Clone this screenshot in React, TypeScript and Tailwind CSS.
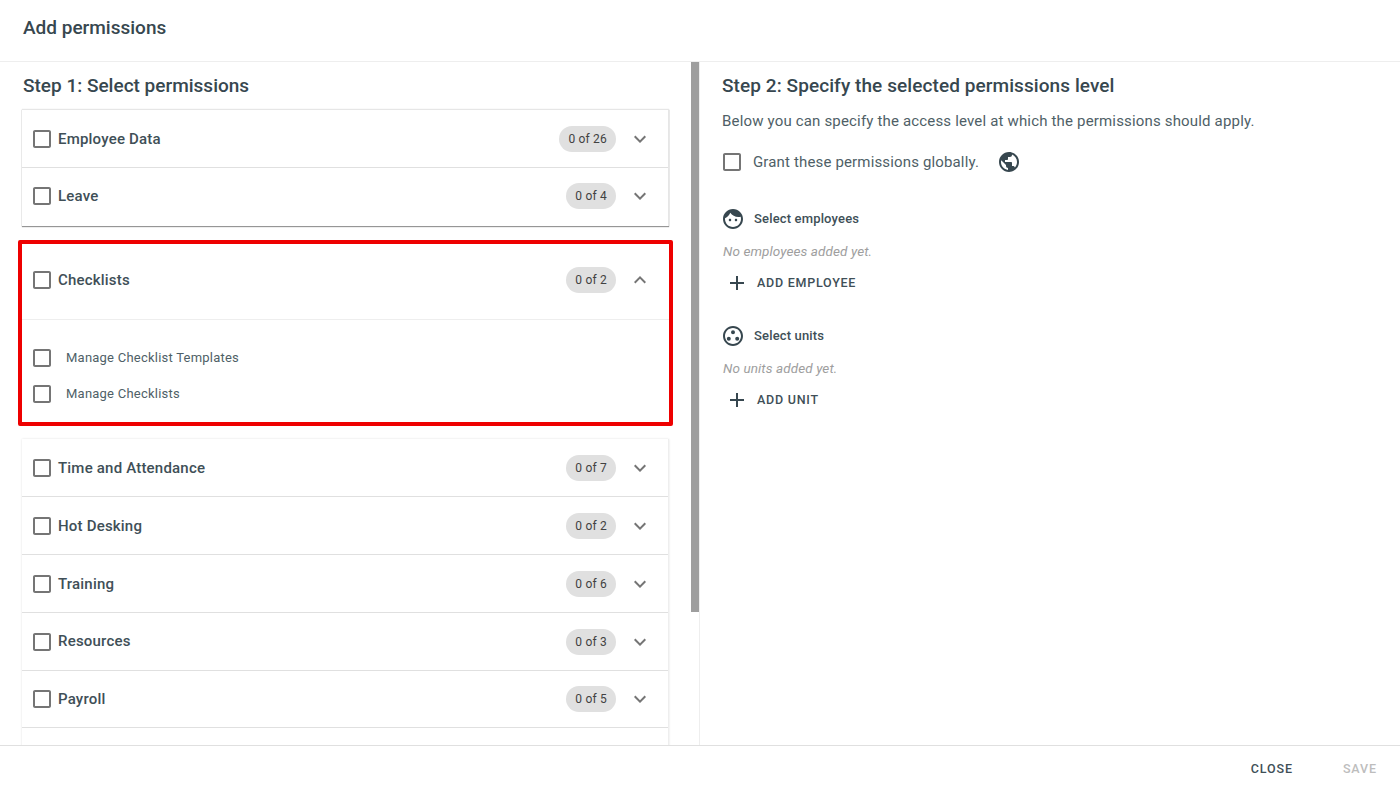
const FONT = "font-['Roboto',sans-serif]"

const CHECKBOX = 'M19 5v14H5V5h14m0-2H5c-1.1 0-2 .9-2 2v14c0 1.1.9 2 2 2h14c1.1 0 2-.9 2-2V5c0-1.1-.9-2-2-2z'
const EXPAND_MORE = 'M16.59 8.59L12 13.17 7.41 8.59 6 10l6 6 6-6z'
const EXPAND_LESS = 'M12 8l-6 6 1.41 1.41L12 10.83l4.59 4.58L18 14z'
const PLUS = 'M19 13h-6v6h-2v-6H5v-2h6V5h2v6h6v2z'
const GLOBE = 'M12 2C6.48 2 2 6.48 2 12s4.48 10 10 10 10-4.48 10-10S17.52 2 12 2zm-1 17.93c-3.95-.49-7-3.85-7-7.93 0-.62.08-1.21.21-1.79L9 15v1c0 1.1.9 2 2 2v1.93zm6.9-2.54c-.26-.81-1-1.39-1.9-1.39h-1v-3c0-.55-.45-1-1-1H8v-2h2c.55 0 1-.45 1-1V7h2c1.1 0 2-.9 2-2v-.41c2.93 1.19 5 4.06 5 7.41 0 2.08-.8 3.97-2.1 5.39z'
const FACE = 'M9 11.75c-.69 0-1.25.56-1.25 1.25s.56 1.25 1.25 1.25 1.25-.56 1.25-1.25-.56-1.25-1.25-1.25zm6 0c-.69 0-1.25.56-1.25 1.25s.56 1.25 1.25 1.25 1.25-.56 1.25-1.25-.56-1.25-1.25-1.25zM12 2C6.48 2 2 6.48 2 12s4.48 10 10 10 10-4.48 10-10S17.52 2 12 2zm0 18c-4.41 0-8-3.59-8-8 0-.29.02-.58.05-.86 2.36-1.05 4.23-2.98 5.21-5.37C11.07 8.33 14.05 10 17.42 10c.78 0 1.53-.09 2.25-.26.21.71.33 1.47.33 2.26 0 4.41-3.59 8-8 8z'
const UNITS = 'M12 2C6.48 2 2 6.48 2 12s4.48 10 10 10 10-4.48 10-10S17.52 2 12 2zm0 18c-4.41 0-8-3.59-8-8s3.59-8 8-8 8 3.59 8 8-3.59 8-8 8zM12 6.2a2 2 0 1 0 0 4 2 2 0 0 0 0-4zM7.8 12.8a2 2 0 1 0 0 4 2 2 0 0 0 0-4zM16.2 12.8a2 2 0 1 0 0 4 2 2 0 0 0 0-4z'

function Icon({ d, className }: { d: string; className: string }) {
  return (
    <svg viewBox="0 0 24 24" fill="currentColor" className={`shrink-0 ${className}`}>
      <path d={d} />
    </svg>
  )
}

function Badge({ text }: { text: string }) {
  return (
    <span className="flex h-[26px] items-center rounded-full bg-[#e0e0e0] px-[9px] text-[12px] tracking-[0.2px] text-[#424242]">
      {text}
    </span>
  )
}

function Row({ label, count, last }: { label: string; count: string; last?: boolean }) {
  return (
    <div className={`flex items-center pl-2 pr-4 ${last ? 'h-[58px] pb-px' : 'h-[57.8px] border-b border-[#e0e0e0] pt-px'}`}>
      <Icon d={CHECKBOX} className="size-6 text-[#757575]" />
      <span className="ml-1 flex-1 text-[15px] font-medium tracking-[0.2px] text-[#404f57]">{label}</span>
      <Badge text={count} />
      <Icon d={EXPAND_MORE} className="ml-3 size-6 text-[#757575]" />
    </div>
  )
}

function SubRow({ label }: { label: string }) {
  return (
    <div className="flex h-9 items-center pl-2">
      <Icon d={CHECKBOX} className="size-6 text-[#757575]" />
      <span className="ml-3 text-[13px] tracking-[0.23px] text-[#4f5f67]">{label}</span>
    </div>
  )
}

function Target({ icon, title, empty, action, className }: { icon: string; title: string; empty: string; action: string; className: string }) {
  return (
    <div className={className}>
      <div className="flex h-6 items-center">
        <Icon d={icon} className="-ml-px size-6 text-[#37474f]" />
        <span className="ml-[9px] text-[13px] font-medium tracking-[0.16px] text-[#404f57]">{title}</span>
      </div>
      <p className="mt-[10px] pl-px text-[13.5px] italic leading-[20px] tracking-[0.1px] text-[#9e9e9e]">{empty}</p>
      <div className="mt-[10px] flex h-6 items-center pl-[3px]">
        <Icon d={PLUS} className="size-6 text-[#37474f]" />
        <span className="ml-2 text-[12.5px] font-medium tracking-[0.75px] text-[#404f57]">{action}</span>
      </div>
    </div>
  )
}

export default function App() {
  return (
    <div className={`flex h-[793px] w-[1400px] flex-col overflow-hidden bg-white ${FONT}`}>
      <header className="flex h-[62px] shrink-0 items-center border-b border-[#eeeeee] pb-[5px] pl-[23px] text-[19px] font-medium text-[#37474f]">
        Add permissions
      </header>

      <div className="flex min-h-0 flex-1">
        {/* Step 1 */}
        <div className="flex w-[700px] shrink-0 border-r border-[#eeeeee]">
          <div className="w-[691px] overflow-hidden pl-[22px] pr-[22px]">
            <h2 className="flex h-[47px] items-center pl-px pt-px text-[19px] font-medium text-[#37474f]">Step 1: Select permissions</h2>
            <div className="border-t border-r border-[#e6e6e6] shadow-[0_1px_1px_rgba(0,0,0,0.4),0_0_1px_rgba(0,0,0,0.12)]">
              <Row label="Employee Data" count="0 of 26" />
              <Row label="Leave" count="0 of 4" last />
            </div>

            <div className="-mx-1 mt-[14px] rounded-[2px] border-4 border-[#ee0000]">
              <div className="flex h-[76px] items-center border-b border-[#eeeeee] pb-[2px] pl-2 pr-[17px]">
                <Icon d={CHECKBOX} className="size-6 text-[#757575]" />
                <span className="ml-1 flex-1 text-[15px] font-medium tracking-[0.2px] text-[#404f57]">Checklists</span>
                <Badge text="0 of 2" />
                <Icon d={EXPAND_LESS} className="ml-3 size-6 text-[#757575]" />
              </div>
              <div className="pt-[20px] pb-[10px]">
                <SubRow label="Manage Checklist Templates" />
                <SubRow label="Manage Checklists" />
              </div>
            </div>

            <div className="mt-[13.6px] border-r border-[#eeeeee] shadow-[0_0_2px_rgba(0,0,0,0.12)]">
              <Row label="Time and Attendance" count="0 of 7" />
              <Row label="Hot Desking" count="0 of 2" />
              <Row label="Training" count="0 of 6" />
              <Row label="Resources" count="0 of 3" />
              <Row label="Payroll" count="0 of 5" />
              <div className="flex h-[58px] items-center justify-end pr-[52px] pt-[2px]">
                <span className="h-[26px] w-[50px] rounded-full bg-[#e0e0e0]" />
              </div>
            </div>
          </div>
          {/* scrollbar */}
          <div className="w-2 shrink-0">
            <div className="h-[550px] bg-[#9e9e9e]" />
          </div>
        </div>

        {/* Step 2 */}
        <div className="flex-1 pl-[22px]">
          <h2 className="flex h-[47px] items-center pt-px text-[19px] font-medium tracking-[0.08px] text-[#37474f]">Step 2: Specify the selected permissions level</h2>
          <p className="mt-px text-[15px] leading-[22px] tracking-[0.17px] text-[#4f5f67]">
            Below you can specify the access level at which the permissions should apply.
          </p>
          <div className="mt-[18px] flex h-6 items-center">
            <Icon d={CHECKBOX} className="size-6 -ml-[2px] text-[#757575]" />
            <span className="ml-[9px] text-[15px] tracking-[0.15px] text-[#4f5f67]">Grant these permissions globally.</span>
            <Icon d={GLOBE} className="ml-[18px] size-6 text-[#37474f]" />
          </div>
          <Target className="mt-[33px]" icon={FACE} title="Select employees" empty="No employees added yet." action="ADD EMPLOYEE" />
          <Target className="mt-[29px]" icon={UNITS} title="Select units" empty="No units added yet." action="ADD UNIT" />
        </div>
      </div>

      <footer className="flex h-[48px] shrink-0 items-center justify-end gap-[50px] border-t border-[#e0e0e0] pr-[23px] text-[12.5px] font-medium tracking-[0.9px]">
        <span className="text-[#404f57]">CLOSE</span>
        <span className="text-[#bdbdbd]">SAVE</span>
      </footer>
    </div>
  )
}
